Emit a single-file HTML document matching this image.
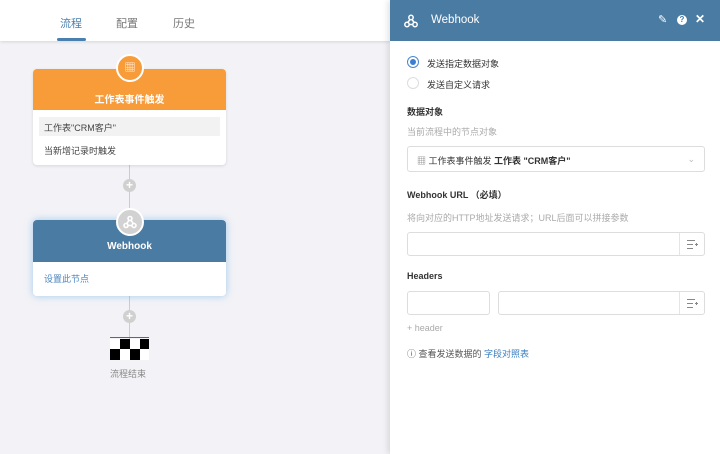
<!DOCTYPE html>
<html><head><meta charset="utf-8"><style>
*{margin:0;padding:0;box-sizing:border-box}
body{width:720px;height:454px;overflow:hidden;position:relative;background:#f3f3f7;font-family:"Liberation Sans","Noto Sans CJK SC",sans-serif;font-size:9px;color:#333}
.a{position:absolute}
.tabs{left:0;top:0;width:390px;height:41px;background:#fff;box-shadow:0 1px 3px rgba(0,0,0,.12)}
.tab{top:15px;font-size:11px;color:#777}
.line{left:129px;width:1px;background:#ccc}
.plus{width:13px;height:13px;border-radius:50%;background:#d0d0d0;color:#fff;font-size:12px;line-height:13px;text-align:center;font-weight:bold}
.card{left:33px;width:193px;background:#fff;border-radius:4px;overflow:hidden;box-shadow:0 1px 3px rgba(0,0,0,.12)}
.panel{left:390px;top:0;width:330px;height:454px;background:#fff;box-shadow:-2px 0 6px rgba(0,0,0,.12)}
.inp{border:1px solid #ddd;border-radius:3px;background:#fff}
.ib{position:absolute;right:0;top:0;bottom:0;width:25px;border-left:1px solid #e5e5e5}
</style></head><body>
<div class="a tabs">
 <div class="a tab" style="left:60px;color:#4a80b0">流程</div>
 <div class="a" style="left:57px;top:38px;width:29px;height:3px;background:#4a80b0;border-radius:2px"></div>
 <div class="a tab" style="left:116px">配置</div>
 <div class="a tab" style="left:173px">历史</div>
</div>
<div class="a line" style="top:160px;height:200px"></div>
<div class="a card" style="top:69px;height:96px">
 <div style="height:41px;background:#f89c3a;color:#fff;font-weight:bold;font-size:10px;text-align:center;padding-top:22px">工作表事件触发</div>
 <div class="a" style="left:6px;top:48px;width:181px;height:19px;background:#f2f2f2;padding:4px 5px;color:#444">工作表"CRM客户"</div>
 <div class="a" style="left:11px;top:75px;color:#444">当新增记录时触发</div>
</div>
<div class="a" style="left:116px;top:54px;width:28px;height:28px;border-radius:50%;background:#f89c3a;border:2px solid #fff;color:#fff;text-align:center;line-height:24px;font-size:11px">▦</div>
<div class="a plus" style="left:123px;top:179px">+</div>
<div class="a card" style="top:220px;height:76px;box-shadow:0 0 8px rgba(80,160,230,.5)">
 <div style="height:42px;background:#4a7ba3;color:#fff;font-weight:bold;font-size:10px;text-align:center;padding-top:21px">Webhook</div>
 <div style="padding:10px 11px;color:#4a86c0">设置此节点</div>
</div>
<div class="a" style="left:116px;top:208px;width:28px;height:28px;border-radius:50%;background:#d2d2d2;border:2px solid #fff">
<svg class="a" style="left:5px;top:5px" width="14" height="14" viewBox="0 0 14 14" fill="none" stroke="#fff" stroke-width="1.6"><circle cx="7" cy="3.5" r="2"/><circle cx="3" cy="10.5" r="2"/><circle cx="11" cy="10.5" r="2"/><path d="M6 5.3L3.6 8.6M5 10.5h4M8 5.3l2.4 3.3"/></svg></div>
<div class="a plus" style="left:123px;top:310px">+</div>
<div class="a" style="left:110px;top:337px;width:39px;height:1px;background:#666"></div>
<svg class="a" style="left:110px;top:339px" width="39" height="21"><rect width="39" height="21" fill="#fff"/><rect x="10" y="0" width="10" height="10"/><rect x="30" y="0" width="9" height="10"/><rect x="0" y="10" width="10" height="11"/><rect x="20" y="10" width="10" height="11"/></svg>
<div class="a" style="left:110px;top:367px;color:#888">流程结束</div>

<div class="a panel">
 <div style="height:41px;background:#4a7ba3;color:#fff;position:relative">
  <svg class="a" style="left:14px;top:14px" width="14" height="14" viewBox="0 0 14 14" fill="none" stroke="#fff" stroke-width="1.5"><circle cx="7" cy="3.5" r="2.2"/><circle cx="3" cy="10.5" r="2.2"/><circle cx="11" cy="10.5" r="2.2"/><path d="M6 5.5L3.8 8.5M5.2 10.5h3.6M8 5.5l2.2 3"/></svg>
  <div class="a" style="left:41px;top:14px;font-size:11.5px">Webhook</div>
  <div class="a" style="left:268px;top:13px;font-size:11px">✎</div>
  <div class="a" style="left:287px;top:15px;width:10px;height:10px;border-radius:50%;background:#fff;color:#4a7ba3;font-size:8px;text-align:center;line-height:10px;font-weight:bold">?</div>
  <div class="a" style="left:305px;top:12px;font-size:12px;font-weight:bold">✕</div>
 </div>
 <div class="a" style="left:17px;top:56px;width:12px;height:12px;border-radius:50%;border:1px solid #4a86d0;background:#fff"><div style="margin:2px;width:6px;height:6px;border-radius:50%;background:#3a7fd0"></div></div>
 <div class="a" style="left:37px;top:57px">发送指定数据对象</div>
 <div class="a" style="left:17px;top:77px;width:12px;height:12px;border-radius:50%;border:1px solid #ddd"></div>
 <div class="a" style="left:37px;top:78px">发送自定义请求</div>
 <div class="a" style="left:17px;top:105px;font-weight:bold">数据对象</div>
 <div class="a" style="left:17px;top:125px;color:#aaa">当前流程中的节点对象</div>
 <div class="a inp" style="left:17px;top:146px;width:298px;height:26px;padding:7px 9px"><span style="color:#888">▦</span> 工作表事件触发 <b>工作表 "CRM客户"</b><span style="position:absolute;right:9px;color:#bbb">⌄</span></div>
 <div class="a" style="left:17px;top:188px;font-weight:bold">Webhook URL （必填）</div>
 <div class="a" style="left:17px;top:211px;color:#aaa">将向对应的HTTP地址发送请求；URL后面可以拼接参数</div>
 <div class="a inp" style="left:17px;top:232px;width:298px;height:24px"><div class="ib"><svg class="a" style="left:7px;top:7px" width="11" height="9" stroke="#888" stroke-width="1"><path d="M0 .5h8M0 4.5h6M0 8.5h6M8 4.5h3M9.5 3v3"/></svg></div></div>
 <div class="a" style="left:17px;top:271px;font-weight:bold">Headers</div>
 <div class="a inp" style="left:17px;top:291px;width:83px;height:24px"></div>
 <div class="a inp" style="left:108px;top:291px;width:207px;height:24px"><div class="ib"><svg class="a" style="left:7px;top:7px" width="11" height="9" stroke="#888" stroke-width="1"><path d="M0 .5h8M0 4.5h6M0 8.5h6M8 4.5h3M9.5 3v3"/></svg></div></div>
 <div class="a" style="left:17px;top:323px;color:#aaa">+ header</div>
 <div class="a" style="left:17px;top:347px;color:#555">ⓘ 查看发送数据的 <span style="color:#3a7fc0">字段对照表</span></div>
</div>
</body></html>
